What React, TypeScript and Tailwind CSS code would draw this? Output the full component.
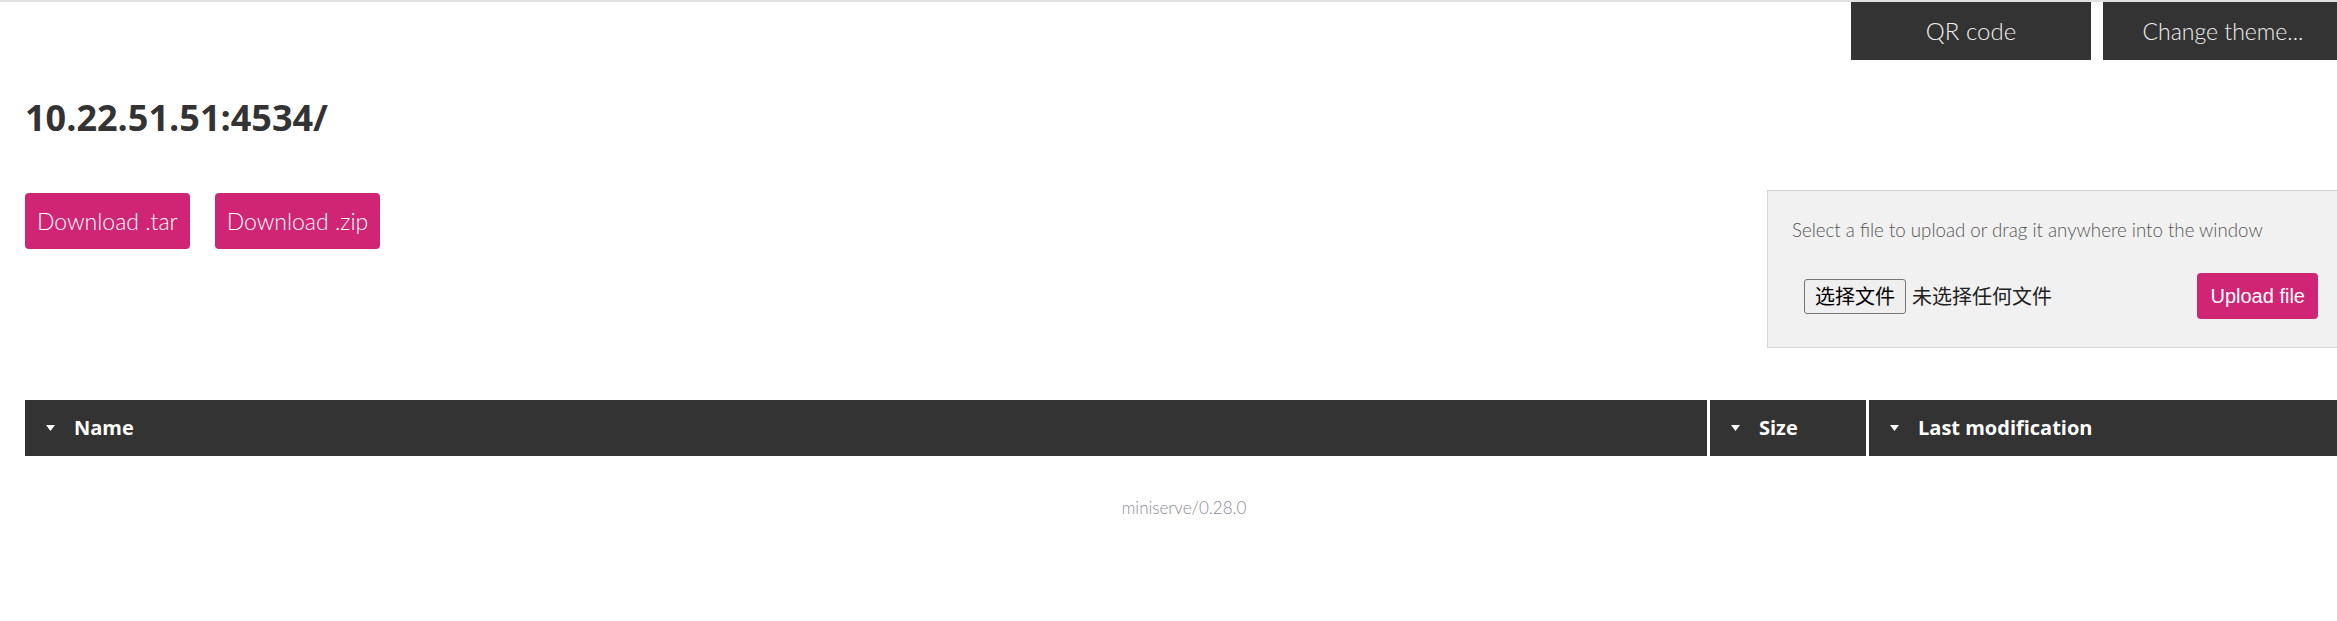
const COLUMNS = [
  { label: "Name", width: "flex-1" },
  { label: "Size", width: "w-[156px]" },
  { label: "Last modification", width: "w-[474px]" },
];

function SortArrow() {
  return (
    <svg width="9" height="6" viewBox="0 0 9 6" className="shrink-0">
      <polygon points="0,0 9,0 4.5,6" fill="#ffffff" />
    </svg>
  );
}

export default function App() {
  return (
    <div className="w-full min-h-[621px] overflow-hidden bg-white border-t-2 border-[#e1e1e1]">
      <div className="w-[2343px] pl-[25px]">
        {/* toolbar */}
        <div className="flex justify-end gap-[12px]">
          <button className="w-[240px] h-[58px] bg-[#333333] text-[#f0f0f0] text-[24px] font-light font-['Lato',sans-serif]">
            QR code
          </button>
          <button className="w-[240px] h-[58px] bg-[#333333] text-[#f0f0f0] text-[23px] font-light font-['Lato',sans-serif]">
            Change theme...
          </button>
        </div>

        <h1 className="mt-[37px] text-[36px] leading-[42px] font-bold text-[#333333] font-['Open_Sans',sans-serif]">
          10.22.51.51:4534/
        </h1>

        <div className="mt-[51px] flex items-start justify-between">
          <div className="mt-[3px] flex gap-[25px]">
            <button className="h-[56px] px-[12px] rounded-[4px] bg-[#d02474] text-white text-[23px] font-light font-['Lato',sans-serif]">
              Download .tar
            </button>
            <button className="h-[56px] px-[12px] rounded-[4px] bg-[#d02474] text-white text-[23px] font-light font-['Lato',sans-serif]">
              Download .zip
            </button>
          </div>

          <div className="w-[576px] border border-[#d5d5d5] bg-[#f1f1f1] pt-[25px] pb-[28px] px-[24px]">
            <p className="text-[18.7px] leading-[28px] font-light text-[#555555] font-['Lato',sans-serif]">
              Select a file to upload or drag it anywhere into the window
            </p>
            <div className="mt-[29px] flex items-center justify-between">
              <div className="ml-[12px] flex items-center gap-[6px] font-['Noto_Sans_CJK_SC',sans-serif] text-[20px] text-black">
                <span className="h-[35px] px-[10px] flex items-center rounded-[3px] border border-[#767676] bg-[#efefef] leading-none">
                  选择文件
                </span>
                <span className="text-[#222222] leading-none">未选择任何文件</span>
              </div>
              <button className="h-[46px] px-[13px] rounded-[4px] bg-[#d02474] text-white text-[20px] font-['Liberation_Sans',Arial,sans-serif]">
                Upload file
              </button>
            </div>
          </div>
        </div>

        {/* listing header */}
        <div className="mt-[52px] flex gap-[3px] h-[56px]">
          {COLUMNS.map((col) => (
            <div
              key={col.label}
              className={`${col.width} bg-[#333333] flex items-center pl-[21px] gap-[19px] text-white text-[20px] leading-[28px] font-bold font-['Open_Sans',sans-serif]`}
            >
              <SortArrow />
              <span>{col.label}</span>
            </div>
          ))}
        </div>

        <footer className="mt-[40px] text-center text-[17px] leading-[24px] text-[#8a8a96] font-light font-['Lato',sans-serif]">
          miniserve/0.28.0
        </footer>
      </div>
    </div>
  );
}
